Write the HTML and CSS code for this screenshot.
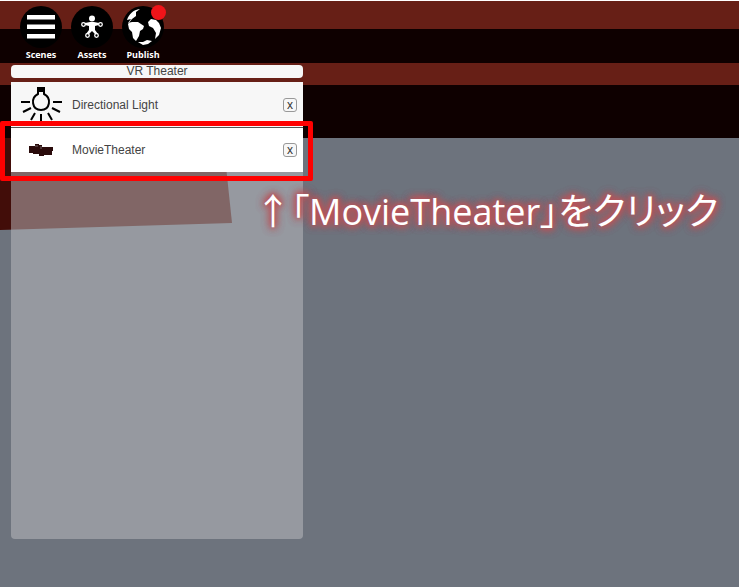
FILE: index.html
```html
<!DOCTYPE html>
<html lang="ja">
<head>
  <meta charset="UTF-8" />
  <meta name="viewport" content="width=device-width, initial-scale=1.0"/>
  <title>VR Theater</title>
  <link rel="stylesheet" href="styles.css">
</head>
<body>

  <div class="scene">
    <div class="wall"></div>

    <nav class="toolbar">
      <button class="tool">
        <svg class="tool-icon" viewBox="0 0 42 42">
          <circle cx="21" cy="21" r="21" fill="#000"/>
          <path d="M7 9h28v4.500H7zM7 18.500h28v4.500H7zM7 28h28v4.500H7z" fill="#fff"/>
        </svg>
        <span>Scenes</span>
      </button>
      <button class="tool">
        <svg class="tool-icon" viewBox="0 0 42 42">
          <circle cx="21" cy="21" r="21" fill="#000"/>
          <circle cx="21" cy="12.500" r="3" fill="#fff"/>
          <path d="M14 17l5-1h4l5 1v2l-4 1v4l3 4-2 1-4-4-4 4-2-1 3-4v-4l-4-1z" fill="#fff"/>
          <g fill="#000" stroke="#fff" stroke-width="1.300">
            <circle cx="12.500" cy="18.500" r="1.800"/>
            <circle cx="29.500" cy="18.500" r="1.800"/>
            <circle cx="16.500" cy="29.500" r="1.800"/>
            <circle cx="25.500" cy="29.500" r="1.800"/>
          </g>
        </svg>
        <span>Assets</span>
      </button>
      <button class="tool">
        <svg class="tool-icon" viewBox="0 0 42 42">
          <circle cx="21" cy="21" r="21" fill="#000"/>
          <path d="M18 3C11 4 7 8 5 14l4-1-3 4 4-1h6l6 4-1 3-3 2-1 5-3 5-3-3-1-6-3-3-1-5 4-5 4-3 0-4z" fill="#fff"/>
          <path d="M29 13l5 1 3 3 2 5-2 7-4 4 1-6-3-5-4-2-1-4zM16 36l5 0 4-2 5 1-4 3-5 1z" fill="#fff"/>
        </svg>
        <span>Publish</span>
        <i class="badge"></i>
      </button>
    </nav>

    <main class="panel">
      <h1 class="panel-title">VR Theater</h1>
      <ul class="objects">
        <li class="object">
          <svg class="object-icon" viewBox="0 0 44 36">
            <path d="M17 0h8v5h-8z" fill="#000"/>
            <path d="M18 4v3c-8 4-6 16 3 16s11-12 3-16V4M1 15h9M33 15h9M3 25l8-4M40 25l-8-4M11 33l4-7M32 33l-4-7M21 27v8" fill="none" stroke="#000" stroke-width="2"/>
          </svg>
          <span class="object-name">Directional Light</span>
          <button class="remove" aria-label="Remove Directional Light">x</button>
        </li>
        <li class="object selected">
          <svg class="object-icon" viewBox="0 0 44 36">
            <path d="M9 14h6v-2h4v1h3v2h11v4h-1v4h-8v1h-5v-2h-6v-1H9z" fill="#2a0b0b"/>
            <path d="M15 13h3v2h-3zM20 14h2v3h-2z" fill="#4f3838"/>
          </svg>
          <span class="object-name">MovieTheater</span>
          <button class="remove" aria-label="Remove MovieTheater">x</button>
          <p class="hint">↑「MovieTheater」<span class="kana">をクリック</span></p>
        </li>
      </ul>
    </main>
  </div>

</body>
</html>
```

FILE: styles.css
```css
body {
  margin: 0;
  font-family: "Liberation Sans", Arial, sans-serif;
  background: #6d737d;
  color: #444;
}
button {
  margin: 0;
  padding: 0;
  cursor: pointer;
}
.scene {
  position: relative;
  display: flex;
  flex-direction: column;
  box-sizing: border-box;
  min-height: 100vh;
  padding: 6px 0 48px;
  overflow: hidden;
  background: linear-gradient(#fff 1px, #671f16 1px 29px, #0e0000 29px 63px, #671f16 63px 85px, #0e0000 85px 138px, transparent 138px);
}
/* side wall of the theater, seen behind the panel */
.wall {
  position: absolute;
  top: 138px;
  left: 0;
  width: 232px;
  height: 92px;
  background: #420d09;
  clip-path: polygon(0 0, 223px 0, 232px 85px, 0 92px);
}
.toolbar {
  position: relative;
  display: flex;
  gap: 9px;
  padding-left: 20px;
}
.tool {
  position: relative;
  display: flex;
  flex-direction: column;
  align-items: center;
  width: 42px;
  border: none;
  background: none;
  color: #fff;
  font: bold 9px/14px "Open Sans", sans-serif;
}
.tool-icon {
  width: 42px;
  height: 42px;
}
.badge {
  position: absolute;
  top: -1px;
  right: -2px;
  width: 15px;
  height: 15px;
  border-radius: 50%;
  background: #f01419;
}
.panel {
  position: relative;
  display: flex;
  flex: 1;
  flex-direction: column;
  gap: 4px;
  width: 292px;
  margin: 3px 0 0 11px;
}
.panel-title {
  margin: 0;
  border-radius: 4px;
  background: #f7f7f7;
  font-size: 12px;
  font-weight: normal;
  line-height: 13px;
  text-align: center;
}
.objects {
  flex: 1;
  margin: 0;
  padding: 0;
  list-style: none;
  border-radius: 4px;
  background: rgba(191, 191, 195, 0.5);
}
.object {
  position: relative;
  display: flex;
  align-items: center;
  box-sizing: border-box;
  height: 45px;
  padding: 0 6px 0 9px;
  background: #f7f7f7;
  font-size: 12px;
}
.object-icon {
  width: 44px;
  height: 36px;
  margin-right: 8px;
}
.object-name {
  flex: 1;
}
.remove {
  width: 14px;
  height: 14px;
  border: 1px solid #999;
  border-radius: 3px;
  background: #f7f7f7;
  color: #333;
  font: 12px/12px "Liberation Sans", Arial, sans-serif;
}
.selected {
  background: #fff;
  border-top: 1px solid #555;
}
.selected::after {
  content: '';
  position: absolute;
  inset: -7px -10px -9px -11px;
  border: 5px solid #f00;
  border-radius: 2px;
}
.hint {
  position: absolute;
  top: 59px;
  left: 244px;
  margin: 0;
  color: #fff;
  font: 36px/48px "Open Sans", "Noto Sans CJK JP", sans-serif;
  font-feature-settings: "palt";
  white-space: nowrap;
  text-shadow: 0 0 5px #b8545a, 0 0 6px #b8545a, 0 0 8px #b8545a, 0 0 10px #b8545a, 0 0 10px #b8545a;
}
.kana {
  font-size: 37px;
}
```
